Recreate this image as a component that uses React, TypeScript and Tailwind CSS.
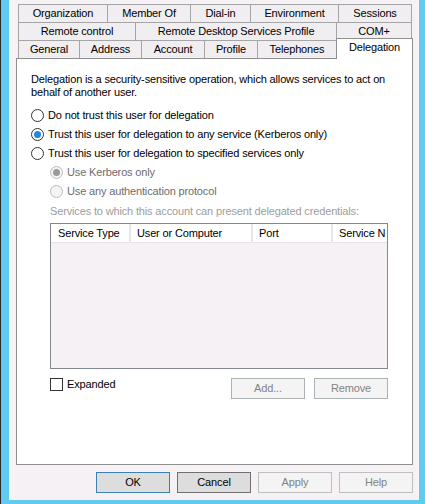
import React from "react";

const row1 = [
  { label: "Organization", cls: "w-[90px]" },
  { label: "Member Of", cls: "w-[84px] -ml-px" },
  { label: "Dial-in", cls: "w-[61px] -ml-px" },
  { label: "Environment", cls: "w-[89px] -ml-px" },
  { label: "Sessions", cls: "w-[74px] -ml-px" },
];
const row2 = [
  { label: "Remote control", cls: "w-[118px]" },
  { label: "Remote Desktop Services Profile", cls: "w-[202px] -ml-px" },
  { label: "COM+", cls: "w-[76px] -ml-px" },
];
const row3 = [
  { label: "General", cls: "w-[62px]" },
  { label: "Address", cls: "w-[63px] -ml-px" },
  { label: "Account", cls: "w-[64px] -ml-px" },
  { label: "Profile", cls: "w-[54px] -ml-px" },
  { label: "Telephones", cls: "w-[80px] -ml-px" },
];

function Tab({ label, cls }: { label: string; cls: string }) {
  return (
    <div
      className={`h-[19px] shrink-0 flex items-center justify-center border border-[#a5a5a5] bg-[#f0eef0] text-black ${cls}`}
    >
      {label}
    </div>
  );
}

function Radio({
  label,
  checked,
  disabled,
}: {
  label: string;
  checked?: boolean;
  disabled?: boolean;
}) {
  return (
    <div className="flex items-center h-[19px]">
      <span
        className={`w-[13px] h-[13px] rounded-full border flex items-center justify-center shrink-0 ${
          disabled ? "border-[#bcbcbc] bg-[#f4f4f4]" : "border-[#333333] bg-white"
        }`}
      >
        {checked && (
          <span
            className={`w-[7px] h-[7px] rounded-full ${
              disabled ? "bg-[#9a9a9a]" : "bg-[#2288da]"
            }`}
          />
        )}
      </span>
      <span className={`ml-[4px] ${disabled ? "text-[#6d6d6d]" : "text-black"}`}>
        {label}
      </span>
    </div>
  );
}

export default function App() {
  return (
    <div
      className="w-[425px] h-[504px] border-l border-[#2b2b2b] bg-[#5fcbf0] pl-[8px] pr-[6px] pb-[4px] flex flex-col text-[11px] tracking-[-0.15px] leading-[13px] text-black"
      style={{ fontFamily: '"Liberation Sans", Arial, sans-serif' }}
    >
      <div className="flex-1 bg-[#f5f1f5] pl-[7px] pr-[6px] pt-[4px] flex flex-col">
        {/* Tabs */}
        <div className="ml-[2px] flex">
          {row1.map((t) => (
            <Tab key={t.label} {...t} />
          ))}
        </div>
        <div className="ml-[2px] -mt-px flex">
          {row2.map((t) => (
            <Tab key={t.label} {...t} />
          ))}
        </div>
        <div className="ml-[2px] -mt-px flex items-end h-[19px]">
          {row3.map((t) => (
            <Tab key={t.label} {...t} />
          ))}
          <div className="relative z-10 -ml-px w-[77px] h-[21px] shrink-0 flex items-center justify-center pb-[3px] border-l border-t border-r border-[#8f8f8f] bg-white">
            Delegation
          </div>
        </div>

        {/* Panel */}
        <div className="-mt-px h-[407px] w-[397px] border border-[#8f8f8f] bg-white pt-[14px] pl-[14px] flex flex-col">
          <p>
            Delegation is a security-sensitive operation, which allows services to act on
            <br />
            behalf of another user.
          </p>
          <div className="mt-[7px] flex flex-col">
            <Radio label="Do not trust this user for delegation" />
            <Radio label="Trust this user for delegation to any service (Kerberos only)" checked />
            <Radio label="Trust this user for delegation to specified services only" />
            <div className="ml-[19px] flex flex-col">
              <Radio label="Use Kerberos only" checked disabled />
              <Radio label="Use any authentication protocol" disabled />
            </div>
          </div>
          <div className="ml-[19px] mt-[4px] text-[#9d9d9d]">
            Services to which this account can present delegated credentials:
          </div>
          <div className="ml-[19px] mt-[5px] w-[338px] h-[146px] border border-[#828790] bg-[#f5f1f5] overflow-hidden">
            <div className="flex h-[19px] border-b border-[#e8e5e8]">
              <div className="w-[80px] shrink-0 bg-white border-r-2 border-[#e8e5e8] pl-[7px] flex items-center">
                Service Type
              </div>
              <div className="w-[122px] shrink-0 bg-white border-r-2 border-[#e8e5e8] pl-[6px] flex items-center">
                User or Computer
              </div>
              <div className="w-[80px] shrink-0 bg-white border-r-2 border-[#e8e5e8] pl-[6px] flex items-center">
                Port
              </div>
              <div className="flex-1 bg-white pl-[6px] flex items-center whitespace-nowrap overflow-hidden">
                Service N
              </div>
            </div>
          </div>
          <div className="ml-[19px] mt-[9px] w-[338px] flex items-start">
            <div className="flex items-center h-[13px]">
              <span className="w-[13px] h-[13px] border border-[#333333] bg-white shrink-0" />
              <span className="ml-[4px]">Expanded</span>
            </div>
            <div className="ml-auto flex gap-[9px]">
              <div className="w-[74px] h-[21px] border border-[#adb2b5] bg-[#f4f4f4] text-[#838383] flex items-center justify-center">
                Add...
              </div>
              <div className="w-[74px] h-[21px] border border-[#adb2b5] bg-[#f4f4f4] text-[#838383] flex items-center justify-center">
                Remove
              </div>
            </div>
          </div>
        </div>

        {/* Dialog buttons */}
        <div className="mt-[7px] w-[397px] flex justify-end gap-[7px]">
          <div className="w-[74px] h-[21px] border border-[#3c7fb1] bg-[#dddddd] flex items-center justify-center">
            OK
          </div>
          <div className="w-[74px] h-[21px] border border-[#707070] bg-[#dddddd] flex items-center justify-center">
            Cancel
          </div>
          <div className="w-[74px] h-[21px] border border-[#bfbfbf] bg-[#f4f4f4] text-[#838383] flex items-center justify-center">
            Apply
          </div>
          <div className="w-[74px] h-[21px] border border-[#bfbfbf] bg-[#f4f4f4] text-[#838383] flex items-center justify-center">
            Help
          </div>
        </div>
      </div>
    </div>
  );
}
